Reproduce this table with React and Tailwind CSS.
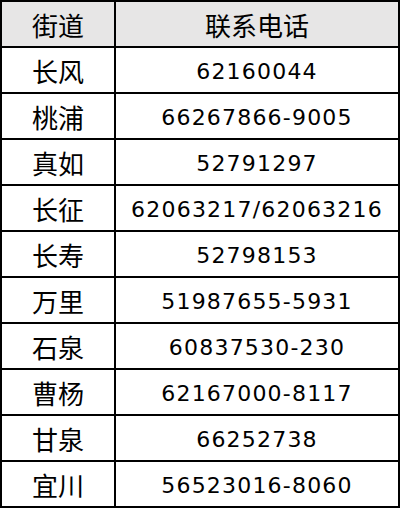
import { Fragment } from "react";

export default function App() {
  const rows = [
    ["长风", "62160044"],
    ["桃浦", "66267866-9005"],
    ["真如", "52791297"],
    ["长征", "62063217/62063216"],
    ["长寿", "52798153"],
    ["万里", "51987655-5931"],
    ["石泉", "60837530-230"],
    ["曹杨", "62167000-8117"],
    ["甘泉", "66252738"],
    ["宜川", "56523016-8060"],
  ];
  return (
    <div className="w-[400px] h-[508px] bg-white text-black">
      <div className="grid grid-cols-[112px_282px] border-2 border-black bg-black gap-[2px]">
        <div className="h-[44px] bg-[#e7e6e6] flex items-center justify-center text-[26px] font-['Noto_Sans_CJK_SC',sans-serif]">街道</div>
        <div className="h-[44px] bg-[#e7e6e6] flex items-center justify-center text-[26px] font-['Noto_Sans_CJK_SC',sans-serif]">联系电话</div>
        {rows.map(([a, b]) => (
          <Fragment key={a}>
            <div className="h-[44px] bg-white flex items-center justify-center text-[26px] font-['Noto_Sans_CJK_SC',sans-serif]">{a}</div>
            <div className="h-[44px] bg-white flex items-center justify-center pt-[3px] text-[22px] tracking-[1.2px] font-['DejaVu_Sans',sans-serif]">{b}</div>
          </Fragment>
        ))}
      </div>
    </div>
  );
}
